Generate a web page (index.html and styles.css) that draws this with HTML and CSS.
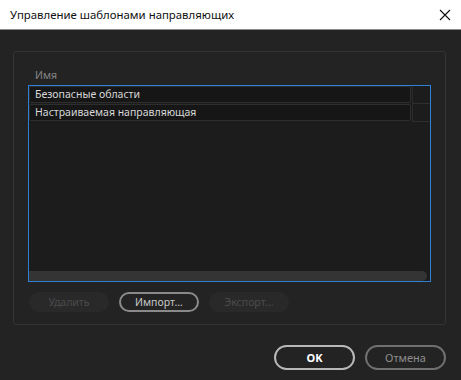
FILE: index.html
```html
<!DOCTYPE html>
<html lang="ru">
  <head>
    <meta charset="UTF-8" />
    <title>Управление шаблонами направляющих</title>
    <link rel="stylesheet" href="styles.css">
  </head>
  <body>
    <div class="titlebar">
      <span class="title">Управление шаблонами направляющих</span>
      <svg class="close" width="12" height="12" viewBox="0 0 12 12">
        <path d="M1 1 L11 11 M11 1 L1 11" stroke="#111" stroke-width="1.1" fill="none" />
      </svg>
    </div>
    <div class="dialog">
      <div class="panel">
        <div class="col-label">Имя</div>
        <div class="list">
          <div class="row">
            <div class="cell">Безопасные области</div>
            <div class="spare"></div>
          </div>
          <div class="row">
            <div class="cell">Настраиваемая направляющая</div>
            <div class="spare"></div>
          </div>
          <div class="list-fill"></div>
          <div class="hscroll"></div>
        </div>
        <div class="actions">
          <button class="btn disabled">Удалить</button>
          <button class="btn outline">Импорт...</button>
          <button class="btn disabled">Экспорт...</button>
        </div>
      </div>
      <div class="footer">
        <button class="btn big primary">OK</button>
        <button class="btn big cancel">Отмена</button>
      </div>
    </div>
  </body>
</html>
```

FILE: styles.css
```css
body {
  margin: 0;
  width: 461px;
  height: 380px;
  background-color: #232323;
  font-family: "Noto Sans", "Open Sans", sans-serif;
  overflow: hidden;
}

.titlebar {
  height: 29px;
  background-color: #ffffff;
  border-bottom: 1px solid #8c8c8c;
  display: flex;
  align-items: center;
  justify-content: space-between;
  padding: 0 9px 0 9px;
}

.title {
  font-size: 11.4px;
  color: #111;
  padding-left: 1px;
}

.close {
  margin-right: 1px;
}

.dialog {
  padding: 21px 15px 0 13px;
}

.panel {
  height: 257px;
  border: 1px solid #353535;
  border-radius: 3px;
  padding: 15px 14px 0 14px;
}

.col-label {
  font-size: 10.5px;
  color: #858585;
  height: 18px;
  line-height: 16px;
  padding-left: 7px;
}

.list {
  height: 195px;
  border: 1px solid #2f7fd4;
  background-color: #1c1c1c;
  display: flex;
  flex-direction: column;
}

.row {
  display: flex;
  height: 18px;
}

.cell {
  flex: 1;
  background-color: #161616;
  border: 1px solid #2e2e2e;
  border-radius: 2px;
  margin-right: 1px;
  font-size: 10.5px;
  color: #d8d8d8;
  line-height: 14px;
  padding-left: 5px;
  box-sizing: border-box;
  height: 17px;
}

.spare {
  width: 17px;
  border-bottom: 1px solid #2e2e2e;
  border-left: 1px solid #2a2a2a;
  height: 17px;
}

.list-fill {
  flex: 1;
}

.hscroll {
  height: 10px;
  margin-right: 3px;
  background-color: #343434;
  border-radius: 0 5px 5px 0;
}

.actions {
  display: flex;
  gap: 10px;
  margin-top: 10px;
  padding-left: 1px;
}

.btn {
  font-family: "Noto Sans", "Open Sans", sans-serif;
  width: 80px;
  height: 20px;
  border-radius: 10px;
  font-size: 10.5px;
  padding: 0;
  box-sizing: border-box;
  line-height: 16px;
}

.btn.disabled {
  background-color: #292929;
  border: 1px solid #292929;
  color: #4c4c4c;
}

.btn.outline {
  background-color: #232323;
  border: 2px solid #8a8a8a;
  color: #c8c8c8;
}

.footer {
  display: flex;
  justify-content: flex-end;
  gap: 10px;
  margin-top: 20px;
}

.btn.big {
  width: 81px;
  height: 25px;
  border-radius: 13px;
  font-size: 11px;
  line-height: 19px;
  background-color: #232323;
}

.btn.primary {
  border: 2px solid #b8b8b8;
  color: #ffffff;
  font-weight: bold;
}

.btn.cancel {
  border: 2px solid #707070;
  color: #8e8e8e;
}
```
